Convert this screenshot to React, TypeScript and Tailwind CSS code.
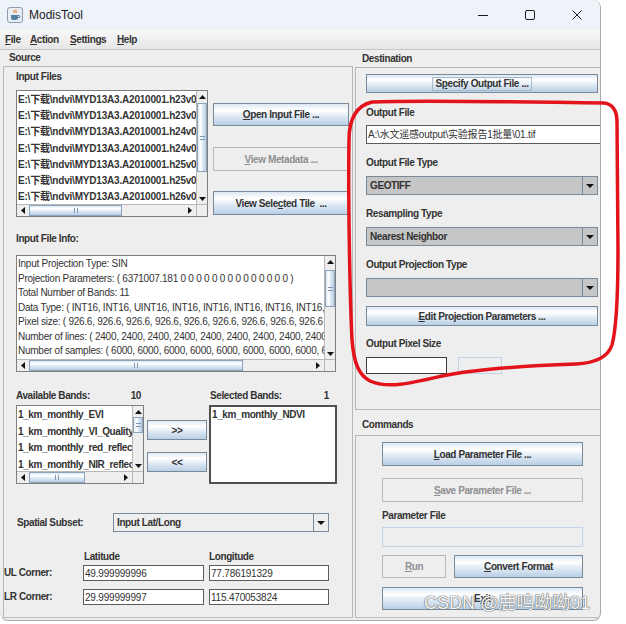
import type { ReactNode } from 'react'

// shared styles
const label = 'text-[10px] font-bold leading-[14px] tracking-[-0.4px] text-[#333333] whitespace-nowrap'
const btnGrad = 'bg-[linear-gradient(to_bottom,#dde8f3_0%,#ffffff_30%,#dde8f3_60%,#b8cfe5_100%)]'

const Tri = ({ dir }: { dir: 'up' | 'down' | 'left' | 'right' }) => {
  const vert = dir === 'up' || dir === 'down'
  const d = { up: 'M0 4L3.5 0L7 4Z', down: 'M0 0L7 0L3.5 4Z', left: 'M4 0L4 7L0 3.5Z', right: 'M0 0L4 3.5L0 7Z' }[dir]
  return (
    <svg width={vert ? 7 : 4} height={vert ? 4 : 7} viewBox={vert ? '0 0 7 4' : '0 0 4 7'}>
      <path d={d} fill="#111" />
    </svg>
  )
}

const VScroll = ({ gap, thumb }: { gap: string; thumb: string }) => (
  <div className="flex flex-col w-[11px] h-full bg-[#eeeeee] border-l border-[#b8b8b8]">
    <div className="h-[11px] shrink-0 flex items-center justify-center">
      <Tri dir="up" />
    </div>
    <div className={`${gap} shrink-0`} />
    <div
      className={`${thumb} shrink-0 border border-[#8aa3bd] bg-[linear-gradient(to_right,#dde8f3,#ffffff_30%,#dde8f3_60%,#b8cfe5)] flex flex-col items-center justify-center gap-[2px]`}
    >
      <div className="w-[5px] h-px bg-[#7d97b3]" />
      <div className="w-[5px] h-px bg-[#7d97b3]" />
    </div>
    <div className="flex-1" />
    <div className="h-[11px] shrink-0 flex items-center justify-center">
      <Tri dir="down" />
    </div>
  </div>
)

const HScroll = ({ thumb }: { thumb: string }) => (
  <div className="flex h-full w-full bg-[#eeeeee] border-t border-[#b8b8b8]">
    <div className="w-[12px] shrink-0 flex items-center justify-center">
      <Tri dir="left" />
    </div>
    <div className={`${thumb} shrink-0 border border-[#8aa3bd] ${btnGrad} flex items-center justify-center gap-[2px]`}>
      <div className="h-[5px] w-px bg-[#7d97b3]" />
      <div className="h-[5px] w-px bg-[#7d97b3]" />
    </div>
    <div className="flex-1" />
    <div className="w-[12px] shrink-0 flex items-center justify-center">
      <Tri dir="right" />
    </div>
  </div>
)

const ListBox = ({ className, children, v, h }: { className: string; children: ReactNode; v: ReactNode; h: ReactNode }) => (
  <div className={`grid grid-cols-[minmax(0,1fr)_11px] grid-rows-[minmax(0,1fr)_12px] border border-[#7f7f7f] bg-white ${className}`}>
    <div className="overflow-hidden min-w-0 pt-[1px] pl-[1px]">{children}</div>
    {v}
    {h}
    <div className="bg-[#eeeeee] border-l border-t border-[#b8b8b8]" />
  </div>
)

const Btn = ({ children, className = '', disabled = false }: { children: ReactNode; className?: string; disabled?: boolean }) => (
  <div
    className={`flex items-center justify-center border text-[10px] font-bold tracking-[-0.4px] whitespace-nowrap ${
      disabled ? 'border-[#b8b8b8] text-[#8e8f91] bg-[#eeeeee]' : `border-[#7a8a99] text-[#333333] ${btnGrad}`
    } ${className}`}
  >
    {children}
  </div>
)

const Combo = ({ value, className }: { value?: string; className: string }) => (
  <div className={`flex border border-[#7a8a99] ${className}`}>
    <div className={`flex-1 flex items-center pl-[3px] ${label}`}>{value}</div>
    <div className="w-[15px] border-l border-[#7a8a99] flex items-center justify-center">
      <svg width="8" height="4" viewBox="0 0 8 4">
        <path d="M0 0L8 0L4 4Z" fill="#111" />
      </svg>
    </div>
  </div>
)

const Field = ({ value, className }: { value?: string; className: string }) => (
  <div className={`flex items-center bg-white border border-[#5c5c5c] pl-[1px] text-[10px] tracking-[-0.2px] text-[#333333] whitespace-nowrap overflow-hidden ${className}`}>
    {value}
  </div>
)

const U = ({ children }: { children: ReactNode }) => <span className="underline">{children}</span>

const files = ['h23v04', 'h23v05', 'h24v04', 'h24v05', 'h25v04', 'h25v05', 'h26v04']

const info = [
  'Input Projection Type: SIN',
  'Projection Parameters: ( 6371007.181 0 0 0 0 0 0 0 0 0 0 0 0 0 0 )',
  'Total Number of Bands: 11',
  'Data Type: ( INT16, INT16, UINT16, INT16, INT16, INT16, INT16, INT16, INT16 )',
  'Pixel size: ( 926.6, 926.6, 926.6, 926.6, 926.6, 926.6, 926.6, 926.6, 926.6 )',
  'Number of lines: ( 2400, 2400, 2400, 2400, 2400, 2400, 2400, 2400, 2400 )',
  'Number of samples: ( 6000, 6000, 6000, 6000, 6000, 6000, 6000, 6000, 6000 )',
]

const bands = ['1_km_monthly_EVI', '1_km_monthly_VI_Quality', '1_km_monthly_red_reflectance', '1_km_monthly_NIR_reflectance']

const TitleBar = () => (
  <div className="h-[30px] shrink-0 flex items-center bg-[#eef2f9]">
    <svg className="ml-[7px]" width="16" height="16" viewBox="0 0 16 16">
      <rect x="0.5" y="0.5" width="15" height="15" rx="2.5" fill="#e9eef5" stroke="#8d9cb0" />
      <path d="M7 3c-1 1 1 2 0 3M9 2.5c-1 1 1 2 0 3.5" stroke="#e76f00" strokeWidth="1" fill="none" />
      <path d="M4 8h7v2.5a2.5 2.5 0 0 1-2.5 2.5h-2A2.5 2.5 0 0 1 4 10.5Z" fill="#5382a1" />
      <path d="M11 8.6h1a1 1 0 0 1 0 2h-1" stroke="#5382a1" fill="none" />
    </svg>
    <span className="ml-[6px] text-[12px] text-[#1b1b1b]">ModisTool</span>
    <div className="ml-auto flex items-center gap-[37px] pr-[18px]">
      <svg width="10" height="10" viewBox="0 0 10 10">
        <path d="M0 5.5H10" stroke="#1b1b1b" strokeWidth="1" />
      </svg>
      <svg width="10" height="10" viewBox="0 0 10 10">
        <rect x="0.5" y="0.5" width="9" height="9" rx="1.5" fill="none" stroke="#1b1b1b" />
      </svg>
      <svg width="10" height="10" viewBox="0 0 10 10">
        <path d="M0.5 0.5L9.5 9.5M9.5 0.5L0.5 9.5" stroke="#1b1b1b" strokeWidth="1" />
      </svg>
    </div>
  </div>
)

const MenuBar = () => (
  <div className="h-[20px] shrink-0 flex items-center border-b border-[#c6c6c6] bg-[linear-gradient(to_bottom,#f8f8f8,#e6e6e6)] pl-[5px]">
    <span className={`${label} w-[25px]`}>
      <U>F</U>ile
    </span>
    <span className={`${label} w-[40px]`}>
      <U>A</U>ction
    </span>
    <span className={`${label} w-[47px]`}>
      <U>S</U>ettings
    </span>
    <span className={label}>
      <U>H</U>elp
    </span>
  </div>
)

const SourcePanel = () => (
  <div className="w-[353px] flex flex-col">
    <div className={`h-[16px] flex items-center pl-[9px] ${label}`}>Source</div>
    <div className="ml-[3px] mb-[2px] flex-1 border border-[#b8b8b8] flex flex-col">
      {/* input files */}
      <div className="flex items-start pl-[12px] mt-[3px]">
        <div className="w-[192px] flex flex-col">
          <div className={label}>Input Files</div>
          <ListBox
            className="mt-[6px] h-[127px]"
            v={<VScroll gap="h-[1px]" thumb="h-[69px]" />}
            h={<HScroll thumb="w-[93px]" />}
          >
            {files.map((f) => (
              <div key={f} className="h-[16.2px] leading-[16.2px] text-[10px] font-bold tracking-[-0.2px] text-[#333333] whitespace-nowrap">
                {`E:\\下载\\ndvi\\MYD13A3.A2010001.${f}.006.2015160154433.hdf`}
              </div>
            ))}
          </ListBox>
        </div>
        <div className="ml-[5px] w-[136px] flex flex-col pt-[33px]">
          <Btn className="h-[23px]">
            <U>O</U>pen Input File ...
          </Btn>
          <Btn disabled className="mt-[21px] h-[24px]">
            <U>V</U>iew Metadata ...
          </Btn>
          <Btn className="mt-[20px] h-[24px] whitespace-pre">
            View Sele<U>c</U>ted Tile  ...
          </Btn>
        </div>
      </div>

      {/* file info */}
      <div className="pl-[12px] mt-[15px]">
        <div className={label}>Input File Info:</div>
        <ListBox
          className="mt-[9px] h-[117px] w-[320px]"
          v={<VScroll gap="h-[3px]" thumb="h-[37px]" />}
          h={<HScroll thumb="w-[214px]" />}
        >
          {info.map((l) => (
            <div key={l} className="h-[14.5px] leading-[14.5px] text-[10px] tracking-[-0.25px] text-[#333333] whitespace-nowrap">
              {l}
            </div>
          ))}
        </ListBox>
      </div>

      {/* bands */}
      <div className="pl-[12px] mt-[17px]">
        <div className="flex h-[14px]">
          <div className={`w-[128px] flex justify-between pr-[3px] ${label}`}>
            <span>Available Bands:</span>
            <span>10</span>
          </div>
          <div className="w-[65px]" />
          <div className={`w-[128px] flex justify-between pl-[1px] pr-[8px] ${label}`}>
            <span>Selected Bands:</span>
            <span>1</span>
          </div>
        </div>
        <div className="flex mt-[2px] h-[79px]">
          <ListBox className="w-[128px] h-[79px]" v={<VScroll gap="h-[0px]" thumb="h-[16px]" />} h={<HScroll thumb="w-[56px]" />}>
            {bands.map((b) => (
              <div key={b} className="h-[16.5px] leading-[16.5px] text-[10px] font-bold tracking-[-0.4px] text-[#333333] whitespace-nowrap">
                {b}
              </div>
            ))}
          </ListBox>
          <div className="ml-[3px] w-[60px] flex flex-col pt-[15px]">
            <Btn className="h-[20px]">&gt;&gt;</Btn>
            <Btn className="mt-[12px] h-[20px]">&lt;&lt;</Btn>
          </div>
          <div className="ml-[2px] w-[128px] border-2 border-[#505050] bg-white pl-[1px]">
            <div className="h-[16px] leading-[16px] text-[10px] font-bold tracking-[-0.4px] text-[#333333]">1_km_monthly_NDVI</div>
          </div>
        </div>
      </div>

      {/* spatial subset */}
      <div className="flex items-center mt-[29px] pl-[13px] h-[19px]">
        <div className={`w-[96px] ${label}`}>Spatial Subset:</div>
        <Combo value="Input Lat/Long" className="w-[216px] h-[19px] bg-[#eeeeee]" />
      </div>

      {/* corners */}
      <div className="flex mt-[18px] h-[14px]">
        <div className="w-[79px]" />
        <div className={`w-[126px] pl-[1px] ${label}`}>Latitude</div>
        <div className={label}>Longitude</div>
      </div>
      <div className="flex items-center mt-[1px] h-[16px]">
        <div className={`w-[79px] ${label}`}>UL Corner:</div>
        <Field value="49.999999996" className="w-[121px] h-[16px]" />
        <Field value="77.786191329" className="ml-[5px] w-[120px] h-[16px]" />
      </div>
      <div className="flex items-center mt-[8px] h-[16px]">
        <div className={`w-[79px] ${label}`}>LR Corner:</div>
        <Field value="29.999999997" className="w-[121px] h-[16px]" />
        <Field value="115.470053824" className="ml-[5px] w-[120px] h-[16px]" />
      </div>
    </div>
  </div>
)

const RightPanel = () => (
  <div className="ml-[2px] w-[245px] flex flex-col">
    <div className={`h-[17px] flex items-center pl-[7px] ${label}`}>Destination</div>
    <div className="h-[343px] border border-r-0 border-[#b8b8b8] flex flex-col pl-[10px]">
      <Btn className="mt-[6px] h-[19px] w-[232px]">
        <span className="border border-[#a3b8cc] px-[2px] leading-[12px]">
          S<U>p</U>ecify Output File ...
        </span>
      </Btn>
      <div className={`mt-[13px] ${label}`}>Output File</div>
      <Field value="A:\水文遥感output\实验报告1批量\01.tif" className="mt-[5px] h-[19px] w-[234px] border-r-0" />
      <div className={`mt-[12px] ${label}`}>Output File Type</div>
      <Combo value="GEOTIFF" className="mt-[6px] h-[19px] w-[232px] bg-[#c6c6c6]" />
      <div className={`mt-[12px] ${label}`}>Resampling Type</div>
      <Combo value="Nearest Neighbor" className="mt-[6px] h-[19px] w-[232px] bg-[#c6c6c6]" />
      <div className={`mt-[12px] ${label}`}>Output Projection Type</div>
      <Combo className="mt-[6px] h-[19px] w-[232px] bg-[#c6c6c6]" />
      <Btn className="mt-[9px] h-[20px] w-[232px]">
        <U>E</U>dit Projection Parameters ...
      </Btn>
      <div className={`mt-[11px] ${label}`}>Output Pixel Size</div>
      <div className="flex mt-[6px] h-[17px]">
        <div className="w-[81px] bg-white border border-[#3c3c3c]" />
        <div className="ml-[11px] w-[44px] border border-[#c4d3e3]" />
      </div>
    </div>
    <div className={`h-[25px] pt-[8px] pl-[7px] ${label}`}>Commands</div>
    <div className="flex-1 mb-[2px] border border-r-0 border-[#b8b8b8] flex flex-col pl-[26px]">
      <Btn className="mt-[6px] h-[24px] w-[201px]">
        <U>L</U>oad Parameter File ...
      </Btn>
      <Btn disabled className="mt-[12px] h-[24px] w-[201px]">
        <U>S</U>ave Parameter File ...
      </Btn>
      <div className={`mt-[7px] ${label}`}>Parameter File</div>
      <div className="mt-[4px] h-[20px] w-[201px] border border-[#c4d3e3]" />
      <div className="flex mt-[8px] h-[23px]">
        <Btn disabled className="w-[64px]">
          <U>R</U>un
        </Btn>
        <Btn className="ml-[8px] w-[129px]">
          <U>C</U>onvert Format
        </Btn>
      </div>
      <Btn className="mt-[9px] h-[23px] w-[201px]">
        E<U>x</U>it
      </Btn>
    </div>
  </div>
)

export default function App() {
  return (
    <div className="relative w-[626px] h-[624px] bg-white overflow-hidden font-['Liberation_Sans','Noto_Sans_CJK_SC',sans-serif]">
      <div className="w-[601px] h-[621px] flex flex-col bg-[#eeeeee] border-r border-b border-[#a9a9a9] rounded-tr-[8px] rounded-b-[8px] overflow-hidden">
        <TitleBar />
        <MenuBar />
        <div className="flex flex-1 min-h-0">
          <SourcePanel />
          <RightPanel />
        </div>
      </div>

      {/* red hand-drawn annotation */}
      <svg className="absolute left-0 top-0 pointer-events-none" width="626" height="624" viewBox="0 0 626 624">
        <path
          d="M372 102 C420 100 520 102 604 103 C612 104 617 109 617 122 L618 250 C618 300 616 330 612 345 C608 357 596 363 576 364 C520 366 472 370 442 376 C412 383 388 389 370 381 C359 375 354 364 352 340 C350 300 348 200 349 140 C349 120 355 106 372 102"
          fill="none"
          stroke="#e3131c"
          strokeWidth="3.5"
          strokeLinecap="round"
        />
      </svg>

      {/* watermark */}
      <div className="absolute left-[424px] top-[591px] text-[18px] leading-[24px] whitespace-nowrap text-[#f5f5f5] [text-shadow:0_0_1px_#6b6b6b,0_0_1px_#6b6b6b,0_0_1px_#6b6b6b]">
        CSDN @鹿鸣呦呦91
      </div>
    </div>
  )
}
